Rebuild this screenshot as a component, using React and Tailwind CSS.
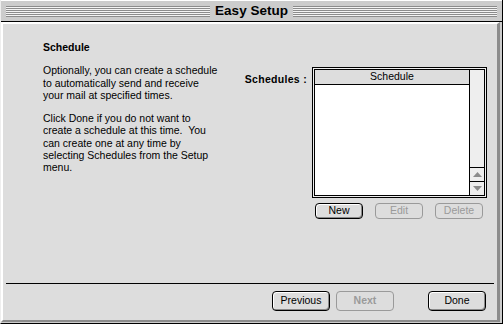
import React from 'react';

const stripes =
  'bg-[repeating-linear-gradient(to_bottom,#8c8c8c_0px,#8c8c8c_1px,#f4f4f4_1px,#f4f4f4_2px)]';

function MacButton({ label, width = 'w-[58px]', height = 'h-[20px]', disabled, bold }) {
  if (disabled) {
    return (
      <div
        className={`${width} ${height} rounded-[4px] border border-[#9a9a9a] bg-[#dddddd] flex items-center justify-center text-[#9a9a9a] ${bold ? 'font-bold' : ''}`}
      >
        {label}
      </div>
    );
  }
  return (
    <div
      className={`${width} ${height} rounded-[4px] border border-black bg-[#dddddd] flex items-center justify-center text-black shadow-[inset_1px_1px_0_#ffffff,inset_-1px_-1px_0_#8a8a8a]`}
    >
      {label}
    </div>
  );
}

function ScheduleList() {
  return (
    <div className="w-[175px] h-[131px] border border-black bg-[#eeeeee] p-px">
      <div className="w-full h-full border border-black bg-white flex">
        <div className="flex-1 flex flex-col">
          <div className="h-[15px] bg-[#dddddd] border-b border-black flex items-center justify-center text-[10.5px]">
            Schedule
          </div>
          <div className="flex-1 bg-white" />
        </div>
        <div className="w-[15px] bg-[#eeeeee] border-l border-black flex flex-col">
          <div className="flex-1" />
          <div className="h-[14px] border-t border-black flex items-center justify-center">
            <svg width="9" height="6" viewBox="0 0 9 6">
              <path d="M4.5 0 L9 5 L0 5 Z" fill="#8c8c8c" />
            </svg>
          </div>
          <div className="h-[14px] border-t border-black flex items-center justify-center">
            <svg width="9" height="6" viewBox="0 0 9 6">
              <path d="M0 0 L9 0 L4.5 5 Z" fill="#8c8c8c" />
            </svg>
          </div>
        </div>
      </div>
    </div>
  );
}

export default function App() {
  return (
    <div
      className="w-[503px] h-[324px] flex flex-col bg-[#cccccc] border-l border-l-[#eeeeee] border-r border-b border-black text-[10.5px] text-black"
      style={{ fontFamily: '"Liberation Sans", Arial, sans-serif' }}
    >
      {/* title bar */}
      <div className="h-[21px] flex items-center px-[5px] border-t border-white">
        <div className={`flex-1 h-[11px] ${stripes}`} />
        <div className="px-[5px] text-[13.5px] font-bold leading-none">Easy Setup</div>
        <div className={`flex-1 h-[11px] ${stripes}`} />
      </div>
      <div className="h-px bg-black" />

      {/* content */}
      <div className="flex-1 mr-[2px] mb-px flex flex-col bg-[#dddddd] border-l-2 border-t-2 border-white border-r-[3px] border-b-2 border-r-[#8c8c8c] border-b-[#8c8c8c]">
        <div className="flex-1 flex">
          <div className="w-[230px] pl-[40px] pt-[17px] leading-[12.3px] whitespace-nowrap">
            <div className="font-bold mb-[11px]">Schedule</div>
            <p className="mb-[11px]">
              Optionally, you can create a schedule
              <br />
              to automatically send and receive
              <br />
              your mail at specified times.
            </p>
            <p>
              Click Done if you do not want to
              <br />
              create a schedule at this time.&nbsp; You
              <br />
              can create one at any time by
              <br />
              selecting Schedules from the Setup
              <br />
              menu.
            </p>
          </div>
          <div className="flex-1 flex justify-end pr-[10px] pt-[43px]">
            <div className="font-bold mr-[5px] mt-[5px] tracking-[0.3px] whitespace-nowrap">Schedules :</div>
            <div className="flex flex-col">
              <ScheduleList />
              <div className="flex gap-[12px] mt-[5px] pl-[3px]">
                <MacButton label="New" width="w-[48px]" height="h-[16px]" />
                <MacButton label="Edit" width="w-[48px]" height="h-[16px]" disabled />
                <MacButton label="Delete" width="w-[48px]" height="h-[16px]" disabled />
              </div>
            </div>
          </div>
        </div>

        <div className="mx-[3px] h-px bg-black" />
        <div className="h-[36px] flex items-start pt-[7px] pr-[11px]">
          <div className="flex-1" />
          <div className="flex gap-[6px]">
            <MacButton label="Previous" />
            <MacButton label="Next" disabled bold />
          </div>
          <div className="ml-[34px]">
            <MacButton label="Done" />
          </div>
        </div>
      </div>
    </div>
  );
}
